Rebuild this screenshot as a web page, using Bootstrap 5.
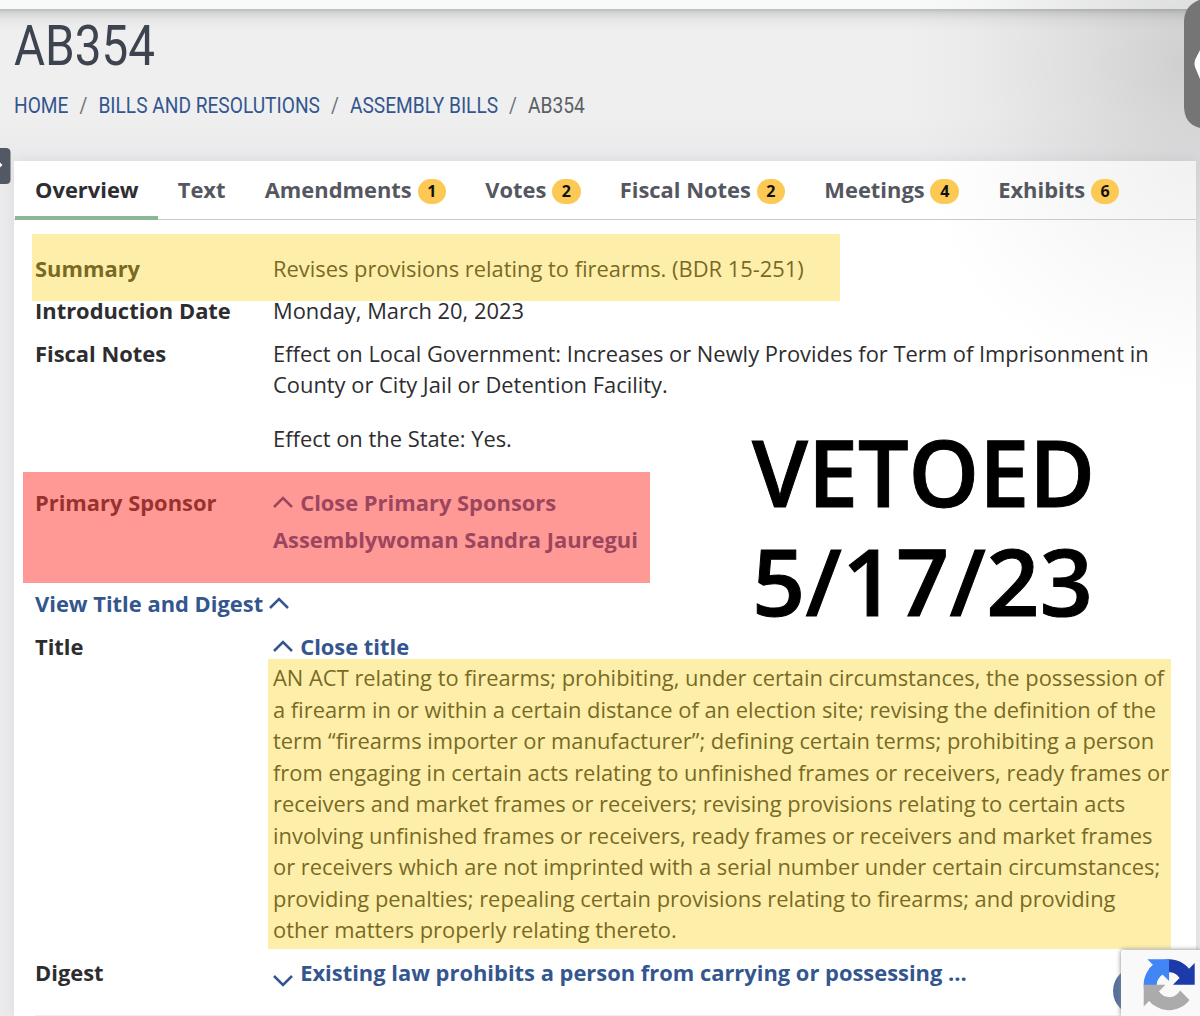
<!DOCTYPE html>
<html lang="en">
<head>
  <meta charset="UTF-8">
  <meta name="viewport" content="width=device-width, initial-scale=1.0">
  <title>AB354 Overview</title>
  <link href="https://cdn.jsdelivr.net/npm/bootstrap@5.3.2/dist/css/bootstrap.min.css" rel="stylesheet">
  <style>
    body {
      background-color: #ebebed;
      color: #2d2d2f;
      font-family: "Open Sans", "Noto Sans", sans-serif;
      font-size: 21.9px;
      line-height: 31.5px;
      height: 1016px;
    }
    a { color: #34568f; text-decoration: none; }
    .top-strip {
      height: 9px;
      background-color: #f8faf9;
    }
    .page-head {
      height: 152px;
      padding: 0 14px;
      background: linear-gradient(#bcbcbc 0, #d6d6d6 4px, #e7e7e7 11px, #efefef 22px, #efefef 105px, #eaeaec 151px);
      font-family: Roboto, sans-serif;
    }
    .page-head h1 {
      font-size: 55px;
      line-height: 60px;
      color: #3d4450;
      padding-top: 7px;
      transform: scaleX(.865);
      transform-origin: left;
      white-space: nowrap;
    }
    .breadcrumb {
      --bs-breadcrumb-item-padding-x: 12.7px;
      --bs-breadcrumb-divider-color: #6f7278;
      --bs-breadcrumb-item-active-color: #5c5f66;
      --bs-breadcrumb-font-size: 22px;
      line-height: 30px;
      padding-top: 15px;
      text-transform: uppercase;
      flex-wrap: nowrap;
      white-space: nowrap;
      transform: scaleX(.87);
      transform-origin: left;
    }
    .bill-card {
      position: relative;
      width: 1182px;
      height: 855px;
      margin-left: 14px;
      background: radial-gradient(ellipse 270px 230px at 100% 0, #f1f1f2, #f8f8f9 50%, #fff) #fff;
      box-shadow: 0 0 14px rgba(0, 0, 0, .07);
    }
    .bill-tabs {
      height: 59px;
      border-bottom: 1px solid #c9cacf;
      font-weight: 700;
      padding-left: 1px;
    }
    .bill-tabs .nav-link {
      color: #54575f;
      height: 59px;
      padding: 14px 19.2px 0 20px;
      line-height: 30px;
      white-space: nowrap;
    }
    .bill-tabs .nav-link.active {
      color: #2d2d33;
      border-bottom: 4px solid #8cb698;
    }
    .count-pill {
      display: inline-block;
      background-color: #fcc955;
      color: #111;
      font-size: 16px;
      line-height: 25px;
      height: 25px;
      width: 28.5px;
      text-align: center;
      border-radius: 13px;
      margin-left: 5.8px;
      vertical-align: 1px;
    }
    .bill-rows { padding: 33px 21px 0; }
    .bill-row { display: flex; margin-bottom: 10.9px; position: relative; }
    .bill-label { flex: 0 0 238px; font-weight: 700; }
    .bill-value { white-space: nowrap; }
    .bill-value a, .digest-toggle { font-weight: 700; }
    .effect-state { margin: 22px 0 0; }
    .fiscal-row { margin-bottom: 33px; }
    .sponsor-row { margin-bottom: 32.5px; }
    .sponsor-name { display: inline-block; margin-top: 5.5px; }
    .title-row { margin-bottom: 11px; }
    .digest-row { border-bottom: 1px solid #efeff1; padding-bottom: 27px; }
    .chev {
      width: 20px; height: 12px; fill: none; stroke: currentColor; stroke-width: 2.5;
      position: relative; top: -3px; margin-right: 1.5px;
    }
    .chev-down { top: 6px; }
    /* marker strokes drawn over the text */
    .hl { position: absolute; pointer-events: none; }
    .hl-yellow { background-color: rgba(250, 209, 22, .37); }
    .hl-red { background-color: rgba(255, 55, 47, .51); }
    .hl-summary { left: -3px; top: -19px; width: 808px; height: 67px; }
    .hl-sponsor { left: -12px; top: -15px; width: 627px; height: 111px; }
    .hl-title { left: 233px; top: 28px; width: 903px; height: 290px; }
    .veto-stamp { position: absolute; left: 740px; top: 390px; }
    .side-shade {
      position: absolute; right: 0; top: 0; width: 330px; height: 360px; pointer-events: none;
      background: radial-gradient(ellipse 300px 270px at 330px 64px, rgba(0, 0, 0, .14), rgba(0, 0, 0, .07) 40%, rgba(0, 0, 0, .018) 75%, transparent);
    }
    .side-handle { position: absolute; right: 0; top: 0; }
    .menu-handle { position: absolute; left: 0; top: 148px; }
    .recaptcha-box {
      position: absolute; right: 0; bottom: 0; width: 79px; height: 66px;
      background-color: #f9f9f9; box-shadow: 0 0 5px #808080; border-radius: 2px 0 0 0; overflow: hidden;
    }
    .top-btn { position: absolute; right: 39px; bottom: 1px; width: 48px; height: 48px; background-color: #56719f; }
  </style>
</head>
<body class="position-relative overflow-hidden">
  <div class="top-strip"></div>

  <header class="page-head">
    <h1 class="m-0 fw-normal">AB354</h1>
    <nav aria-label="breadcrumb">
      <ol class="breadcrumb mb-0">
        <li class="breadcrumb-item"><a href="#">Home</a></li>
        <li class="breadcrumb-item"><a href="#">Bills and Resolutions</a></li>
        <li class="breadcrumb-item"><a href="#">Assembly Bills</a></li>
        <li class="breadcrumb-item active">AB354</li>
      </ol>
    </nav>
  </header>
  <div class="side-shade"></div>

  <main class="bill-card">
    <ul class="nav bill-tabs flex-nowrap">
      <li class="nav-item"><a class="nav-link active" href="#">Overview</a></li>
      <li class="nav-item"><a class="nav-link" href="#">Text</a></li>
      <li class="nav-item"><a class="nav-link" href="#">Amendments<span class="count-pill">1</span></a></li>
      <li class="nav-item"><a class="nav-link" href="#">Votes<span class="count-pill">2</span></a></li>
      <li class="nav-item"><a class="nav-link" href="#">Fiscal Notes<span class="count-pill">2</span></a></li>
      <li class="nav-item"><a class="nav-link" href="#">Meetings<span class="count-pill">4</span></a></li>
      <li class="nav-item"><a class="nav-link" href="#">Exhibits<span class="count-pill">6</span></a></li>
    </ul>

    <div class="bill-rows">
      <div class="bill-row">
        <div class="bill-label">Summary</div>
        <div class="bill-value">Revises provisions relating to firearms. (BDR 15-251)</div>
        <div class="hl hl-yellow hl-summary"></div>
      </div>
      <div class="bill-row">
        <div class="bill-label">Introduction Date</div>
        <div class="bill-value">Monday, March 20, 2023</div>
      </div>
      <div class="bill-row fiscal-row">
        <div class="bill-label">Fiscal Notes</div>
        <div class="bill-value">
          Effect on Local Government: Increases or Newly Provides for Term of Imprisonment in<br>
          County or City Jail or Detention Facility.
          <p class="effect-state">Effect on the State: Yes.</p>
        </div>
      </div>
      <div class="bill-row sponsor-row">
        <div class="bill-label">Primary Sponsor</div>
        <div class="bill-value">
          <a href="#"><svg class="chev" viewBox="0 0 20 12"><path d="M1 11 10 2l9 9"/></svg> Close Primary Sponsors</a><br>
          <a class="sponsor-name" href="#">Assemblywoman Sandra Jauregui</a>
        </div>
        <div class="hl hl-red hl-sponsor"></div>
      </div>
      <div class="bill-row">
        <a class="digest-toggle" href="#">View Title and Digest <svg class="chev" viewBox="0 0 20 12"><path d="M1 11 10 2l9 9"/></svg></a>
      </div>
      <div class="bill-row title-row">
        <div class="bill-label">Title</div>
        <div class="bill-value">
          <a href="#"><svg class="chev" viewBox="0 0 20 12"><path d="M1 11 10 2l9 9"/></svg> Close title</a><br>
          AN ACT relating to firearms; prohibiting, under certain circumstances, the possession of<br>
          a firearm in or within a certain distance of an election site; revising the definition of the<br>
          term “firearms importer or manufacturer”; defining certain terms; prohibiting a person<br>
          from engaging in certain acts relating to unfinished frames or receivers, ready frames or<br>
          receivers and market frames or receivers; revising provisions relating to certain acts<br>
          involving unfinished frames or receivers, ready frames or receivers and market frames<br>
          or receivers which are not imprinted with a serial number under certain circumstances;<br>
          providing penalties; repealing certain provisions relating to firearms; and providing<br>
          other matters properly relating thereto.
        </div>
        <div class="hl hl-yellow hl-title"></div>
      </div>
      <div class="bill-row digest-row">
        <div class="bill-label">Digest</div>
        <div class="bill-value"><a href="#"><svg class="chev chev-down" viewBox="0 0 20 12"><path d="m1 1 9 9 9-9"/></svg> Existing law prohibits a person from carrying or possessing ...</a></div>
      </div>
    </div>
  </main>

  <svg class="veto-stamp" width="370" height="270" font-family="Open Sans, sans-serif" font-weight="600" font-size="93" stroke="#000" stroke-width="1">
    <text x="12" y="117" textLength="343" lengthAdjust="spacingAndGlyphs">VETOED</text>
    <text x="12" y="225.500" textLength="341" lengthAdjust="spacing">5/17/23</text>
  </svg>

  <svg class="side-handle" width="16" height="129" viewBox="0 0 16 129">
    <path d="M16 0h-1Q0 6 0 22v84q0 18 16 22z" fill="#757575"/>
    <path d="M16 50l-5 10q-1 3.500 0 7l5 12z" fill="#fff"/>
  </svg>
  <svg class="menu-handle" width="11" height="37" viewBox="0 0 11 37">
    <path d="M0 0h6q4.500 0 4.500 4.500v27q0 4.500-4.500 4.500H0z" fill="#535964"/>
    <path d="M0 14.500 2.500 17 0 19.500z" fill="#fff"/>
  </svg>

  <div class="top-btn rounded-circle"></div>
  <div class="recaptcha-box">
    <svg class="d-block" width="79" height="66" viewBox="0 0 79 66">
      <g transform="translate(22.700 9.200) scale(.797)">
        <path d="M64 31.955l-.016-1.370V4.687l-7.160 7.160C50.964 4.674 42.033.093 32.033.093c-10.400 0-19.635 4.960-25.458 12.640l11.736 11.860a15.550 15.550 0 0 1 4.754-5.334c2.050-1.600 4.952-2.906 8.968-2.906.485 0 .860.057 1.135.163 4.976.393 9.288 3.140 11.828 7.124l-8.307 8.307z" fill="#1c3aa9"/>
        <path d="M31.862.094l-1.370.016H4.594l7.160 7.160C4.580 13.147 0 22.080 0 32.060c0 10.400 4.960 19.635 12.640 25.458L24.500 45.784a15.550 15.550 0 0 1-5.334-4.754c-1.600-2.050-2.906-4.952-2.906-8.968 0-.485.057-.860.163-1.135.393-4.976 3.140-9.288 7.124-11.828l8.307 8.307z" fill="#4285f4"/>
        <path d="M0 32.061l.016 1.370v25.898l7.160-7.160c5.873 7.175 14.804 11.755 24.787 11.755 10.400 0 19.635-4.960 25.458-12.640L45.686 39.423a15.550 15.550 0 0 1-4.754 5.334c-2.050 1.600-4.952 2.906-8.968 2.906-.485 0-.860-.057-1.135-.163-4.976-.393-9.288-3.140-11.828-7.124l8.307-8.307z" fill="#ababab"/>
      </g>
    </svg>
  </div>

  <script src="https://cdn.jsdelivr.net/npm/bootstrap@5.3.2/dist/js/bootstrap.bundle.min.js"></script>
</body>
</html>
